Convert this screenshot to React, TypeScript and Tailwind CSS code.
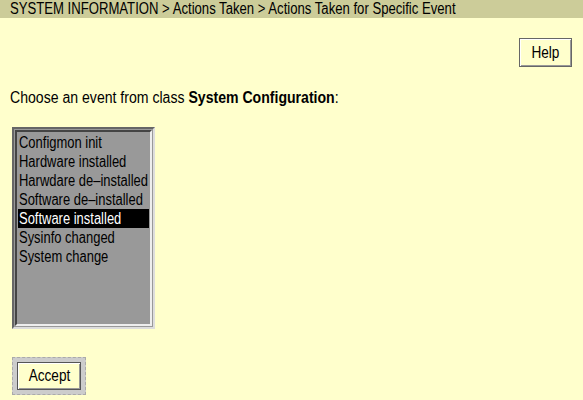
import React from "react";

const items = [
  "Configmon init",
  "Hardware installed",
  "Harwdare de\u2013installed",
  "Software de\u2013installed",
  "Software installed",
  "Sysinfo changed",
  "System change",
];

export default function App() {
  const font = { fontFamily: '"Liberation Sans", Arial, sans-serif' };
  return (
    <div className="w-[583px] h-[400px] bg-[#ffffcc] text-black overflow-hidden" style={font}>
      <div className="h-[18px] bg-[#cccc99] pl-[10px] text-[16px] leading-[17px] whitespace-nowrap">
        <span className="inline-block origin-left scale-x-[0.82]">
          SYSTEM INFORMATION &gt; Actions Taken &gt; Actions Taken for Specific Event
        </span>
      </div>
      <div className="flex justify-end pr-[11px] pt-[20px]">
        <button className="w-[53px] h-[29px] bg-[#ffffcc] border border-[#666] shadow-[inset_1px_1px_0_#fff,inset_-1px_-1px_0_#999] text-[16px] leading-none">
          <span className="inline-block scale-x-[0.85]">Help</span>
        </button>
      </div>
      <div className="pl-[10px] pt-[22px] text-[16px] leading-[18px] whitespace-nowrap">
        <span className="inline-block origin-left scale-x-[0.88]">
          Choose an event from class <span className="font-bold">System Configuration</span>:
        </span>
      </div>
      <div className="ml-[12px] mt-[20px] w-[143px] h-[202px] border-2 border-t-[#666] border-l-[#666] border-b-[#ddd] border-r-[#ddd] bg-[#999] p-[1px]">
        <div className="h-full border-2 border-t-[#444] border-l-[#444] border-b-[#eee] border-r-[#eee] pt-[1px] pl-[1px] pr-[1px]">
          {items.map((it) => (
            <div
              key={it}
              className={
                "h-[19px] leading-[19px] text-[16px] whitespace-nowrap pl-[1px] " +
                (it === "Software installed" ? "bg-black text-white" : "")
              }
            >
              <span className="inline-block origin-left scale-x-[0.81]">{it}</span>
            </div>
          ))}
        </div>
      </div>
      <div className="ml-[12px] mt-[28px] w-[74px] h-[38px] border border-dashed border-[#aaa] bg-[#ccc] p-[4px] flex">
        <button className="flex-1 bg-[#ffffcc] border border-[#555] shadow-[inset_1px_1px_0_#fff,inset_-1px_-1px_0_#999] text-[16px] leading-none">
          <span className="inline-block scale-x-[0.85]">Accept</span>
        </button>
      </div>
    </div>
  );
}
